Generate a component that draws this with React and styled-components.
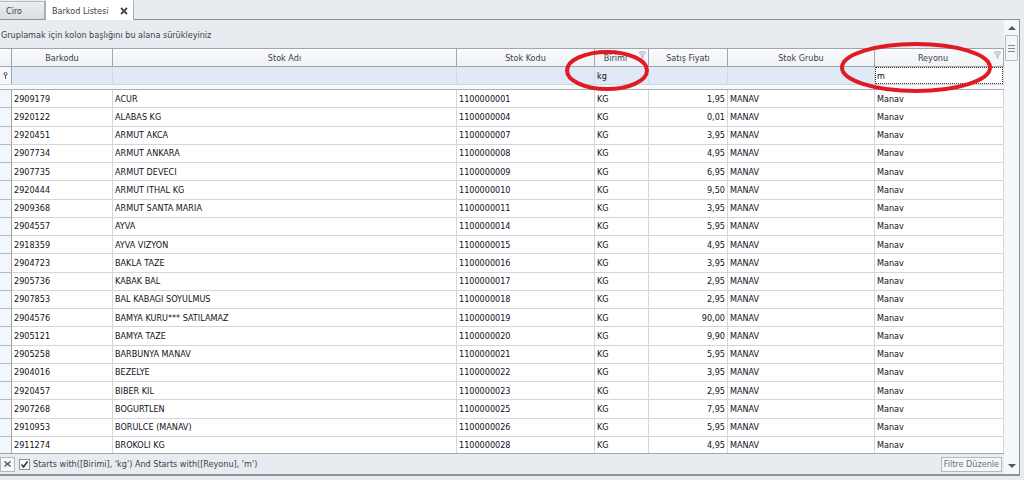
import React, { useState } from 'react'

import styled, { createGlobalStyle } from "styled-components";


const GlobalStyle = createGlobalStyle`
    * {
        box-sizing: border-box;
    }

    body {
        margin: 0;
        background-color: #e8ebef;
        font-family: "DejaVu Sans Condensed", "DejaVu Sans", sans-serif;
        font-size: 9px;
        color: #101018;
    }

    button, input {
        font: inherit;
        color: inherit;
    }
`;

const StyledPage = styled.div`
    display: flex;
    flex-direction: column;
    height: 100vh;
    padding-bottom: 4px;
    background-color: #e8ebef;
`;

const StyledTabs = styled.div`
    display: flex;
    align-items: flex-end;
    height: 19px;
`;

const StyledTab = styled.button`
    display: flex;
    align-items: center;
    justify-content: space-between;
    height: ${props => props.$active ? '20px' : '18px'};
    padding: 0 5px 0 6px;
    border: 1px solid #a9adb4;
    border-left-width: ${props => props.$active ? '1px' : '0'};
    border-top-color: ${props => props.$active ? '#fff' : '#b9bdc3'};
    border-bottom: 0;
    background: ${props => props.$active ? '#fff' : 'linear-gradient(#eceef1, #d9dce1)'};
    color: #3c3f48;
    min-width: ${props => props.$active ? '89px' : '45px'};
    margin-bottom: ${props => props.$active ? '-1px' : '0'};
    z-index: 1;
`;

const StyledPanel = styled.div`
    display: flex;
    flex: 1;
    min-height: 0;
    margin-right: 4px;
    border: 1px solid #8e9299;
    border-width: 1px 1px 2px 0;
    background-color: #fff;
`;

const StyledGrid = styled.div`
    display: flex;
    flex-direction: column;
    flex: 1;
    min-width: 0;
`;

const StyledGroupPanel = styled.div`
    height: 28px;
    padding: 0 1px;
    background-color: #e8ebef;
    color: #3c3f48;
    line-height: 30px;
`;

const StyledTableArea = styled.div`
    flex: 1;
    min-height: 0;
`;

/* the last row runs under the footer border */
const StyledTable = styled.table`
    width: 100%;
    height: calc(100% + 2px);
    table-layout: fixed;
    border-collapse: separate;
    border-spacing: 0;
`;

const StyledCol = styled.col`
    width: ${props => props.$width ? props.$width + 'px' : 'auto'};
`;

const StyledHeaderCell = styled.th`
    position: relative;
    height: 19px;
    padding: 0 ${props => props.$filtered ? '12px' : '0'} 0 0;
    border: 1px solid #9fa6ae;
    border-left: 0;
    background: linear-gradient(#f9fafb, #f0f2f6);
    color: #3c3f48;
    font-weight: normal;
    text-align: center;
    white-space: nowrap;
`;

const StyledFilterCell = styled.td`
    height: 18px;
    padding: 0;
    border-right: 1px solid ${props => props.$gutter ? '#9fa6ae' : '#d2dde8'};
    border-bottom: 1px solid #ccd6e0;
    background-color: ${props => props.$gutter ? '#f5f7fa' : '#dfeaf6'};
    text-align: center;
`;

const StyledFilterInput = styled.input`
    display: block;
    width: 100%;
    height: 17px;
    padding: 0 1px;
    border: ${props => props.$focused ? '1px dotted #333' : '1px solid transparent'};
    border-radius: 0;
    background-color: ${props => props.$focused ? '#fff' : 'transparent'};
    outline: none;
`;

const StyledDivider = styled.td`
    height: 5px;
    padding: 0;
    border-bottom: 1px solid #a8adb3;
    background-color: #f8f9fb;
`;

const StyledCell = styled.td`
    padding: 0 2px;
    border-right: 1px solid #d4d7da;
    border-bottom: 1px solid #d4d7da;
    background-color: #fff;
    line-height: 12px;
    text-align: ${props => props.$align || 'left'};
    white-space: nowrap;
`;

const StyledGutterCell = styled.td`
    padding: 0;
    border-right: 1px solid #9fa6ae;
    border-bottom: 1px solid #b4bac2;
    background-color: #f3f6fa;
`;

const StyledFunnel = styled.svg`
    position: absolute;
    top: 2px;
    right: 2px;
`;

const StyledMark = styled.svg`
    position: absolute;
    top: ${props => props.$top}px;
    left: ${props => props.$left}px;
    z-index: 2;
    pointer-events: none;
`;

const StyledFooter = styled.div`
    position: relative;
    display: flex;
    align-items: center;
    gap: 4px;
    height: 21px;
    padding: 0 2px 0 0;
    border-top: 1px solid #9fa6ae;
    background-color: #e8ebef;
    color: #3c3f48;
`;

const StyledFooterButton = styled.button`
    display: flex;
    align-items: center;
    justify-content: center;
    height: 15px;
    padding: 0 ${props => props.$icon ? '3px' : '2px'};
    margin-left: ${props => props.$icon ? '0' : 'auto'};
    border: 1px solid #b4b8bf;
    background-color: #f5f6f8;
    color: #6c6f78;
    white-space: nowrap;
`;

const StyledFilterLabel = styled.label`
    display: flex;
    align-items: center;
    gap: 3px;
`;

const StyledCheckbox = styled.input`
    appearance: none;
    width: 11px;
    height: 11px;
    margin: 0;
    border: 1px solid #8e9299;
    background: #f7f8f9;

    &:checked {
        background: #f7f8f9 url("data:image/svg+xml,%3Csvg xmlns='http://www.w3.org/2000/svg' viewBox='0 0 9 9'%3E%3Cpath d='M1.5 4.5l2 2.5 4-5.5' fill='none' stroke='%2333363d' stroke-width='1.6'/%3E%3C/svg%3E");
    }
`;

const StyledScrollbar = styled.div`
    display: flex;
    flex-direction: column;
    width: 15px;
    padding: 1px;
    background-color: #f6f7f8;
`;

const StyledScrollButton = styled.button`
    display: flex;
    align-items: center;
    justify-content: center;
    height: 14px;
    padding: 0;
    border: 0;
    background: none;
`;

const StyledThumb = styled.div`
    display: flex;
    align-items: center;
    justify-content: center;
    height: 26px;
    border: 1px solid #b4b8bf;
    border-radius: 1px;
    background-color: #f4f5f6;
`;

const StyledTrack = styled.div`
    flex: 1;
`;


const columns = [
    { key: 'barkod', label: 'Barkodu', width: 101 },
    { key: 'ad', label: 'Stok Adı' },
    { key: 'kod', label: 'Stok Kodu', width: 138 },
    { key: 'birim', label: 'Birimi', width: 54, filtered: true, mark: { left: -30, top: 1, width: 84, height: 41 } },
    { key: 'fiyat', label: 'Satış Fiyatı', width: 79, align: 'right' },
    { key: 'grup', label: 'Stok Grubu', width: 147 },
    { key: 'reyon', label: 'Reyonu', width: 129, filtered: true, focused: true, mark: { left: -35, top: -7, width: 152, height: 51 } },
];

const rows = [
    ['2909179', 'ACUR', '1100000001', '1,95'],
    ['2920122', 'ALABAS KG', '1100000004', '0,01'],
    ['2920451', 'ARMUT AKCA', '1100000007', '3,95'],
    ['2907734', 'ARMUT ANKARA', '1100000008', '4,95'],
    ['2907735', 'ARMUT DEVECI', '1100000009', '6,95'],
    ['2920444', 'ARMUT ITHAL KG', '1100000010', '9,50'],
    ['2909368', 'ARMUT SANTA MARIA', '1100000011', '3,95'],
    ['2904557', 'AYVA', '1100000014', '5,95'],
    ['2918359', 'AYVA VIZYON', '1100000015', '4,95'],
    ['2904723', 'BAKLA TAZE', '1100000016', '3,95'],
    ['2905736', 'KABAK BAL', '1100000017', '2,95'],
    ['2907853', 'BAL KABAGI SOYULMUS', '1100000018', '2,95'],
    ['2904576', 'BAMYA KURU*** SATILAMAZ', '1100000019', '90,00'],
    ['2905121', 'BAMYA TAZE', '1100000020', '9,90'],
    ['2905258', 'BARBUNYA MANAV', '1100000021', '5,95'],
    ['2904016', 'BEZELYE', '1100000022', '3,95'],
    ['2920457', 'BIBER KIL', '1100000023', '2,95'],
    ['2907268', 'BOGURTLEN', '1100000025', '7,95'],
    ['2910953', 'BORULCE (MANAV)', '1100000026', '5,95'],
    ['2911274', 'BROKOLI KG', '1100000028', '4,95'],
].map(([barkod, ad, kod, fiyat]) => ({ barkod, ad, kod, fiyat, birim: 'KG', grup: 'MANAV', reyon: 'Manav' }));


function Mark({ left, top, width, height }){
    return (
        <StyledMark $left={left} $top={top} width={width} height={height}>
            <ellipse
                cx={width / 2}
                cy={height / 2}
                rx={width / 2 - 2}
                ry={height / 2 - 2}
                fill="none"
                stroke="#e01b24"
                strokeWidth="4"
            />
        </StyledMark>
    )
}

function Funnel(){
    return (
        <StyledFunnel width="7" height="8" viewBox="0 0 7 8">
            <path d="M0.5 1.2C2 0.4 5 0.4 6.5 1.2C6.3 2.8 5 3.8 4 4.2V7H3V4.2C2 3.8 0.7 2.8 0.5 1.2z" fill="#dde1e6" stroke="#a6abb4" strokeWidth="0.8" />
        </StyledFunnel>
    )
}

function Arrow({ down }){
    return (
        <svg width="8" height="4" viewBox="0 0 8 4">
            <path d={down ? "M0 0h8L4 4z" : "M0 4h8L4 0z"} fill="#55585f" />
        </svg>
    )
}

function Grid(){
    const [filters, setFilters] = useState({ birim: 'kg', reyon: 'm' });

    const onFilter = key => e => setFilters({ ...filters, [key]: e.target.value });

    return (
        <StyledTable>
            <colgroup>
                <StyledCol $width={12} />
                {columns.map(c => <StyledCol key={c.key} $width={c.width} />)}
            </colgroup>
            <thead>
                <tr>
                    <StyledHeaderCell />
                    {columns.map(c => (
                        <StyledHeaderCell key={c.key} scope="col" $filtered={c.filtered}>
                            {c.label}
                            {c.filtered && <Funnel />}
                            {c.mark && <Mark {...c.mark} />}
                        </StyledHeaderCell>
                    ))}
                </tr>
                <tr>
                    <StyledFilterCell $gutter>
                        <svg width="5" height="7" viewBox="0 0 5 7">
                            <circle cx="2.5" cy="2" r="1.5" fill="none" stroke="#555861" />
                            <path d="M2.5 3.5V7" stroke="#555861" />
                        </svg>
                    </StyledFilterCell>
                    {columns.map(c => (
                        <StyledFilterCell key={c.key}>
                            <StyledFilterInput
                                aria-label={c.label}
                                $focused={c.focused}
                                value={filters[c.key] || ''}
                                onChange={onFilter(c.key)}
                            />
                        </StyledFilterCell>
                    ))}
                </tr>
                <tr>
                    <StyledDivider colSpan={columns.length + 1} />
                </tr>
            </thead>
            <tbody>
                {rows.map(row => (
                    <tr key={row.barkod}>
                        <StyledGutterCell />
                        {columns.map(c => (
                            <StyledCell key={c.key} $align={c.align}>{row[c.key]}</StyledCell>
                        ))}
                    </tr>
                ))}
            </tbody>
        </StyledTable>
    )
}

export default function App(){
    const [enabled, setEnabled] = useState(true);

    return (
        <StyledPage>
            <GlobalStyle />
            <StyledTabs>
                <StyledTab>Ciro</StyledTab>
                <StyledTab $active>
                    Barkod Listesi
                    <svg width="8" height="8" viewBox="0 0 8 8">
                        <path d="M1 1l6 6M7 1L1 7" stroke="#44474f" strokeWidth="1.8" />
                    </svg>
                </StyledTab>
            </StyledTabs>
            <StyledPanel>
                <StyledGrid>
                    <StyledGroupPanel>Gruplamak için kolon başlığını bu alana sürükleyiniz</StyledGroupPanel>
                    <StyledTableArea>
                        <Grid />
                    </StyledTableArea>
                    <StyledFooter>
                        <StyledFooterButton $icon aria-label="Filtreyi kapat">
                            <svg width="7" height="6" viewBox="0 0 7 6">
                                <path d="M0.5 0.5l6 5M6.5 0.5l-6 5" stroke="#55585f" strokeWidth="1.4" />
                            </svg>
                        </StyledFooterButton>
                        <StyledFilterLabel>
                            <StyledCheckbox
                                type="checkbox"
                                checked={enabled}
                                onChange={e => setEnabled(e.target.checked)}
                            />
                            Starts with([Birimi], 'kg') And Starts with([Reyonu], 'm')
                        </StyledFilterLabel>
                        <StyledFooterButton>Filtre Düzenle</StyledFooterButton>
                    </StyledFooter>
                </StyledGrid>
                <StyledScrollbar>
                    <StyledScrollButton aria-label="Yukarı"><Arrow /></StyledScrollButton>
                    <StyledThumb>
                        <svg width="7" height="7" viewBox="0 0 7 7">
                            <path d="M0 0.5h7M0 3.5h7M0 6.5h7" stroke="#858990" />
                        </svg>
                    </StyledThumb>
                    <StyledTrack />
                    <StyledScrollButton aria-label="Aşağı"><Arrow down /></StyledScrollButton>
                </StyledScrollbar>
            </StyledPanel>
        </StyledPage>
    )
}
